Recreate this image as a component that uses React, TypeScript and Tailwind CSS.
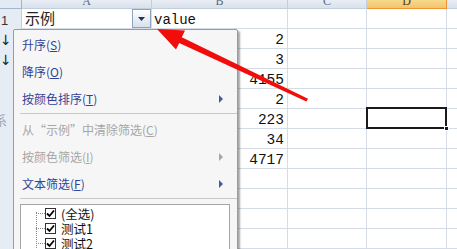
import React from "react";

const cjk = { fontFamily: '"Noto Sans CJK SC", "Noto Sans", sans-serif' };
const mono = { fontFamily: '"Liberation Mono", "DejaVu Sans Mono", monospace' };

const cols = [
  { k: "A", w: "w-[130px]" },
  { k: "B", w: "w-[136px]" },
  { k: "C", w: "w-[79px]" },
  { k: "D", w: "w-[80px]" },
];

const values: Record<number, string> = { 2: "2", 3: "3", 4: "4155", 5: "2", 6: "223", 7: "34", 8: "4717" };

function Arrow({ color }: { color: string }) {
  return (
    <svg width="6" height="8" viewBox="0 0 6 8">
      <path d="M1 0 L5 4 L1 8 Z" fill={color} />
    </svg>
  );
}

function Item({
  label,
  mn,
  disabled,
  sub,
}: {
  label: string;
  mn: string;
  disabled?: boolean;
  sub?: boolean;
}) {
  const color = disabled ? "text-[#a6a6a6]" : "text-[#30429a]";
  return (
    <div className={`h-[27px] flex items-center pl-[8px] pr-[13px] text-[12px] ${color}`} style={cjk}>
      <span className="flex-1 whitespace-nowrap">
        {label}(<span className="underline">{mn}</span>)
      </span>
      {sub && <Arrow color={disabled ? "#a6a6a6" : "#4458a8"} />}
    </div>
  );
}

function Check() {
  return (
    <span className="w-[11px] h-[11px] border border-[#333] bg-white flex items-center justify-center">
      <svg width="9" height="9" viewBox="0 0 9 9">
        <path d="M1 4.5 L3.5 7 L8 1.5" stroke="#000" strokeWidth="1.8" fill="none" />
      </svg>
    </span>
  );
}

export default function App() {
  const rows = Array.from({ length: 12 }, (_, i) => i + 1);
  return (
    <div className="relative w-[457px] h-[249px] overflow-hidden bg-white">
      {/* header row */}
      <div className="flex h-[9px]">
        <div className="w-[22px] h-full bg-[#e4eaf3] border-r border-b border-[#9eb6ce]" />
        {cols.map((c) => (
          <div
            key={c.k}
            className={`${c.w} h-full flex items-end justify-center overflow-hidden border-r border-b ${
              c.k === "D"
                ? "bg-gradient-to-b from-[#f8d98f] to-[#f3c36a] border-[#f29436] text-[#4a3a10]"
                : "bg-gradient-to-b from-[#e9eef5] to-[#d9e1ec] border-[#c2cedc] text-[#5a6a80]"
            }`}
          >
            <span className="text-[12px] leading-[12px] mb-[1px]" style={{ fontFamily: '"Liberation Serif", serif' }}>
              {c.k}
            </span>
          </div>
        ))}
        <div className="flex-1 h-full bg-gradient-to-b from-[#e9eef5] to-[#d9e1ec] border-b border-[#c2cedc]" />
      </div>
      {rows.map((r) => (
        <div key={r} className="flex h-[20px]">
          <div className="w-[22px] h-full bg-[#e6ecf4] border-r border-[#c2cedc] relative text-[13px] text-[#333] overflow-hidden">
            {r === 1 && <span className="absolute left-[1px] top-[2px]" style={{ fontFamily: '"Liberation Sans", sans-serif' }}>1</span>}
            {(r === 2 || r === 3) && (
              <span className="absolute left-[0px] top-[1px] text-[14px] text-[#222]" style={{ fontFamily: '"DejaVu Sans", sans-serif' }}>↓</span>
            )}
            {r === 6 && (
              <span className="absolute left-[-6px] top-[1px] text-[13px] text-[#9aa3b0]" style={cjk}>系</span>
            )}
          </div>
          {cols.map((c) => (
            <div key={c.k} className={`${c.w} h-full border-r border-b border-[#d5dce8] relative`}>
              {r === 1 && c.k === "A" && (
                <div className="h-full flex items-center">
                  <span className="pl-[3px] text-[15px] text-[#222] flex-1" style={cjk}>示例</span>
                  <div className="w-[19px] h-[19px] border border-[#8ea3bf] bg-gradient-to-b from-[#ffffff] to-[#d8e0eb] flex items-center justify-center">
                    <svg width="7" height="4" viewBox="0 0 7 4">
                      <path d="M0 0 L7 0 L3.5 4 Z" fill="#1f2f6a" />
                    </svg>
                  </div>
                </div>
              )}
              {r === 1 && c.k === "B" && (
                <span className="absolute left-[2px] top-[1px] text-[14px] text-[#111]" style={mono}>value</span>
              )}
              {c.k === "B" && values[r] && (
                <span className="absolute right-[3px] top-[1px] text-[14.5px] text-[#111]" style={mono}>{values[r]}</span>
              )}
            </div>
          ))}
          <div className="flex-1 h-full border-b border-[#d5dce8]" />
        </div>
      ))}

      {/* selected cell D6 */}
      <div className="absolute left-[366px] top-[107px] w-[81px] h-[22px] border-[2px] border-[#1a1a1a]" />
      <div className="absolute left-[444px] top-[126px] w-[5px] h-[5px] bg-[#1a1a1a] border border-white" />

      {/* filter menu */}
      <div className="absolute left-[13px] top-[29px] w-[225px] h-[240px] bg-[#f6f6f6] border border-[#9a9a9a] rounded-[2px] shadow-[2px_2px_2px_rgba(0,0,0,0.35)] pt-[1px]">
        <Item label="升序" mn="S" />
        <Item label="降序" mn="O" />
        <Item label="按颜色排序" mn="T" sub />
        <div className="ml-[6px] mt-[1px] mb-[2px] h-[1px] bg-[#c9c9c9]" />
        <Item label="从“示例”中清除筛选" mn="C" disabled />
        <Item label="按颜色筛选" mn="I" disabled sub />
        <Item label="文本筛选" mn="F" sub />
        <div className="ml-[6px] mt-[1px] mb-[5px] h-[1px] bg-[#c9c9c9]" />
        <div className="ml-[6px] w-[210px] h-[60px] bg-white border border-[#a5a5a5] relative">
          <div className="absolute left-[15px] top-[7px] h-[50px] border-l border-dotted border-[#888]" />
          <div className="flex flex-col pt-[1px]">
            {["(全选)", "测试1", "测试2"].map((t) => (
              <div key={t} className="h-[15px] flex items-center relative">
                <div className="absolute left-[15px] top-[7px] w-[9px] border-t border-dotted border-[#888]" />
                <div className="ml-[24px] mr-[5px]">
                  <Check />
                </div>
                <span className="text-[12.5px] text-[#111] leading-[14px]" style={cjk}>{t}</span>
              </div>
            ))}
          </div>
        </div>
      </div>

      {/* red arrow */}
      <svg className="absolute left-0 top-0 pointer-events-none" width="457" height="249">
        <polygon
          points="157,29 185,30.5 181.8,37.2 308,98.8 306.4,101.6 179.2,43 176,49.5"
          fill="#f20d0d"
        />
      </svg>
    </div>
  );
}
